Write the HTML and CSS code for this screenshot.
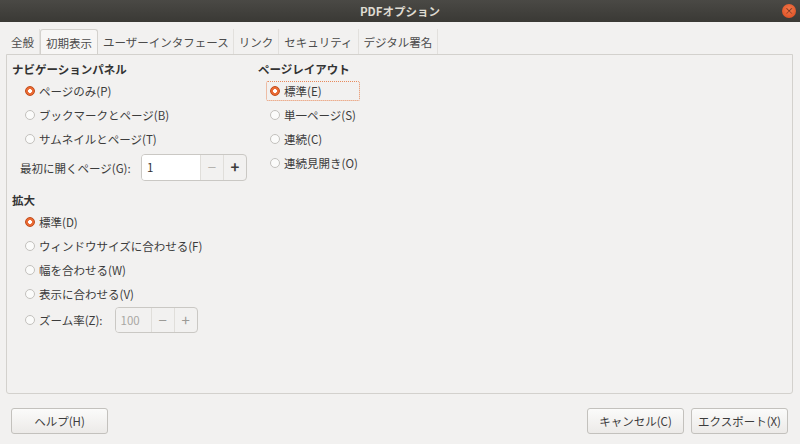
FILE: index.html
```html
<!DOCTYPE html>
<html lang="ja">
<head>
  <meta charset="UTF-8">
  <title>PDFオプション</title>
  <link rel="stylesheet" href="styles.css">
</head>
<body>
  <div class="titlebar">
    <span class="title">PDFオプション</span>
    <span class="close">×</span>
  </div>

  <div class="tabs">
    <div class="tab">全般</div>
    <div class="tab active">初期表示</div>
    <div class="tab">ユーザーインタフェース</div>
    <div class="tab">リンク</div>
    <div class="tab">セキュリティ</div>
    <div class="tab">デジタル署名</div>
  </div>

  <div class="frame">
    <div class="columns">
      <div class="col left">
        <div class="heading">ナビゲーションパネル</div>
        <div class="radio on">ページのみ(P)</div>
        <div class="radio">ブックマークとページ(B)</div>
        <div class="radio">サムネイルとページ(T)</div>
        <div class="spin-row">
          <span class="label">最初に開くページ(G):</span>
          <div class="spin">
            <span class="value">1</span>
            <span class="btn off">−</span>
            <span class="btn">+</span>
          </div>
        </div>

        <div class="heading second">拡大</div>
        <div class="radio on">標準(D)</div>
        <div class="radio">ウィンドウサイズに合わせる(F)</div>
        <div class="radio">幅を合わせる(W)</div>
        <div class="radio">表示に合わせる(V)</div>
        <div class="radio zoom">ズーム率(Z):
          <div class="spin small disabled">
            <span class="value">100</span>
            <span class="btn">−</span>
            <span class="btn">+</span>
          </div>
        </div>
      </div>

      <div class="col right">
        <div class="heading">ページレイアウト</div>
        <div class="radio on focus">標準(E)</div>
        <div class="radio">単一ページ(S)</div>
        <div class="radio">連続(C)</div>
        <div class="radio">連続見開き(O)</div>
      </div>
    </div>
  </div>

  <div class="actions">
    <button class="button">ヘルプ(H)</button>
    <div class="spacer"></div>
    <button class="button">キャンセル(C)</button>
    <button class="button">エクスポート(X)</button>
  </div>
</body>
</html>
```

FILE: styles.css
```css
body {
  margin: 0;
  background: #f2f1f0;
  font-family: "Noto Sans CJK JP", "Noto Sans", sans-serif;
  font-size: 11.5px;
  color: #3c3c3c;
  width: 800px;
  height: 444px;
  overflow: hidden;
}
.titlebar {
  height: 22px;
  background: linear-gradient(#4a4945, #3a3935);
  display: flex;
  align-items: center;
  justify-content: center;
  position: relative;
}
.title {
  color: #dfdbd2;
  font-weight: bold;
  font-size: 11.5px;
}
.close {
  position: absolute;
  right: 4px;
  top: 4px;
  width: 14px;
  height: 14px;
  border-radius: 50%;
  background: radial-gradient(circle at 50% 40%, #f27a4c, #d9471c);
  color: #5a2310;
  font-size: 9px;
  line-height: 14px;
  text-align: center;
}
.tabs {
  display: flex;
  margin: 7px 0 0 7px;
  height: 25px;
}
.tab {
  padding: 1px 5px 0;
  line-height: 25px;
  color: #4c4c4c;
  border-right: 1px solid #e2e0dd;
}
.tab:first-child {
  padding-left: 4px;
}
.tab:nth-child(3) {
  padding-right: 4px;
}
.tab.active {
  background: #f7f6f5;
  border: 1px solid #d3d1cd;
  border-bottom: none;
  border-radius: 3px 3px 0 0;
  line-height: 24px;
}
.frame {
  margin: 0 7px 0 6px;
  height: 338px;
  border: 1px solid #d3d1cd;
  border-radius: 0 0 3px 3px;
  padding: 0 5px;
}
.columns {
  display: flex;
}
.col.left {
  width: 246px;
}
.col.right {
  width: 200px;
}
.heading {
  font-weight: bold;
  color: #333;
  height: 16px;
  line-height: 16px;
  margin-top: 6px;
  margin-bottom: 2px;
}
.heading.second {
  margin-top: 10px;
}
.radio {
  display: flex;
  align-items: center;
  height: 24px;
  padding-left: 13px;
  gap: 4px;
}
.col.right .radio {
  padding-left: 12px;
}
.radio::before {
  content: "";
  width: 8px;
  height: 8px;
  border-radius: 50%;
  border: 1px solid #c3c1bd;
  background: #fbfbfa;
  flex: none;
}
.radio.on::before {
  border-color: #c24b18;
  background: radial-gradient(circle, #fff 0 1.6px, #ea6b35 2.2px);
}
.radio.focus {
  position: relative;
}
.radio.focus::after {
  content: "";
  position: absolute;
  left: 8px;
  top: 2px;
  width: 92px;
  height: 18px;
  border: 1px dotted #e88a5c;
  border-radius: 2px;
}
.spin-row {
  display: flex;
  align-items: center;
  height: 29px;
  padding-left: 8px;
  margin-top: 2px;
}
.label {
  width: 121px;
}
.spin {
  display: flex;
  height: 25px;
  width: 104px;
  border: 1px solid #cac8c4;
  border-radius: 4px;
  overflow: hidden;
  background: #f2f1f0;
}
.spin .value {
  flex: 1;
  background: #fff;
  padding-left: 5px;
  line-height: 25px;
  color: #333;
}
.spin .btn {
  width: 22px;
  border-left: 1px solid #e0deda;
  text-align: center;
  line-height: 24px;
  font-size: 15px;
  font-weight: bold;
  color: #3c3c3c;
}
.spin .btn.off {
  color: #b5b3af;
  font-weight: normal;
}
.radio.zoom {
  height: 28px;
}
.spin.small {
  width: 81px;
  height: 24px;
  margin-left: 8px;
}
.spin.disabled .value {
  background: #f2f1f0;
  color: #a9a7a3;
  line-height: 24px;
}
.spin.disabled .btn {
  color: #9c9a96;
  font-weight: normal;
}
.actions {
  display: flex;
  gap: 7px;
  padding: 14px 11px 0 11px;
}
.spacer {
  flex: 1;
}
.button {
  font-family: inherit;
  font-size: 11.5px;
  color: #3c3c3c;
  width: 97px;
  height: 26px;
  border: 1px solid #c3c1bd;
  border-radius: 3px;
  background: linear-gradient(#fbfbfa, #eceae8);
  padding: 0;
}
.button:last-child {
  margin-right: 1px;
}
```
